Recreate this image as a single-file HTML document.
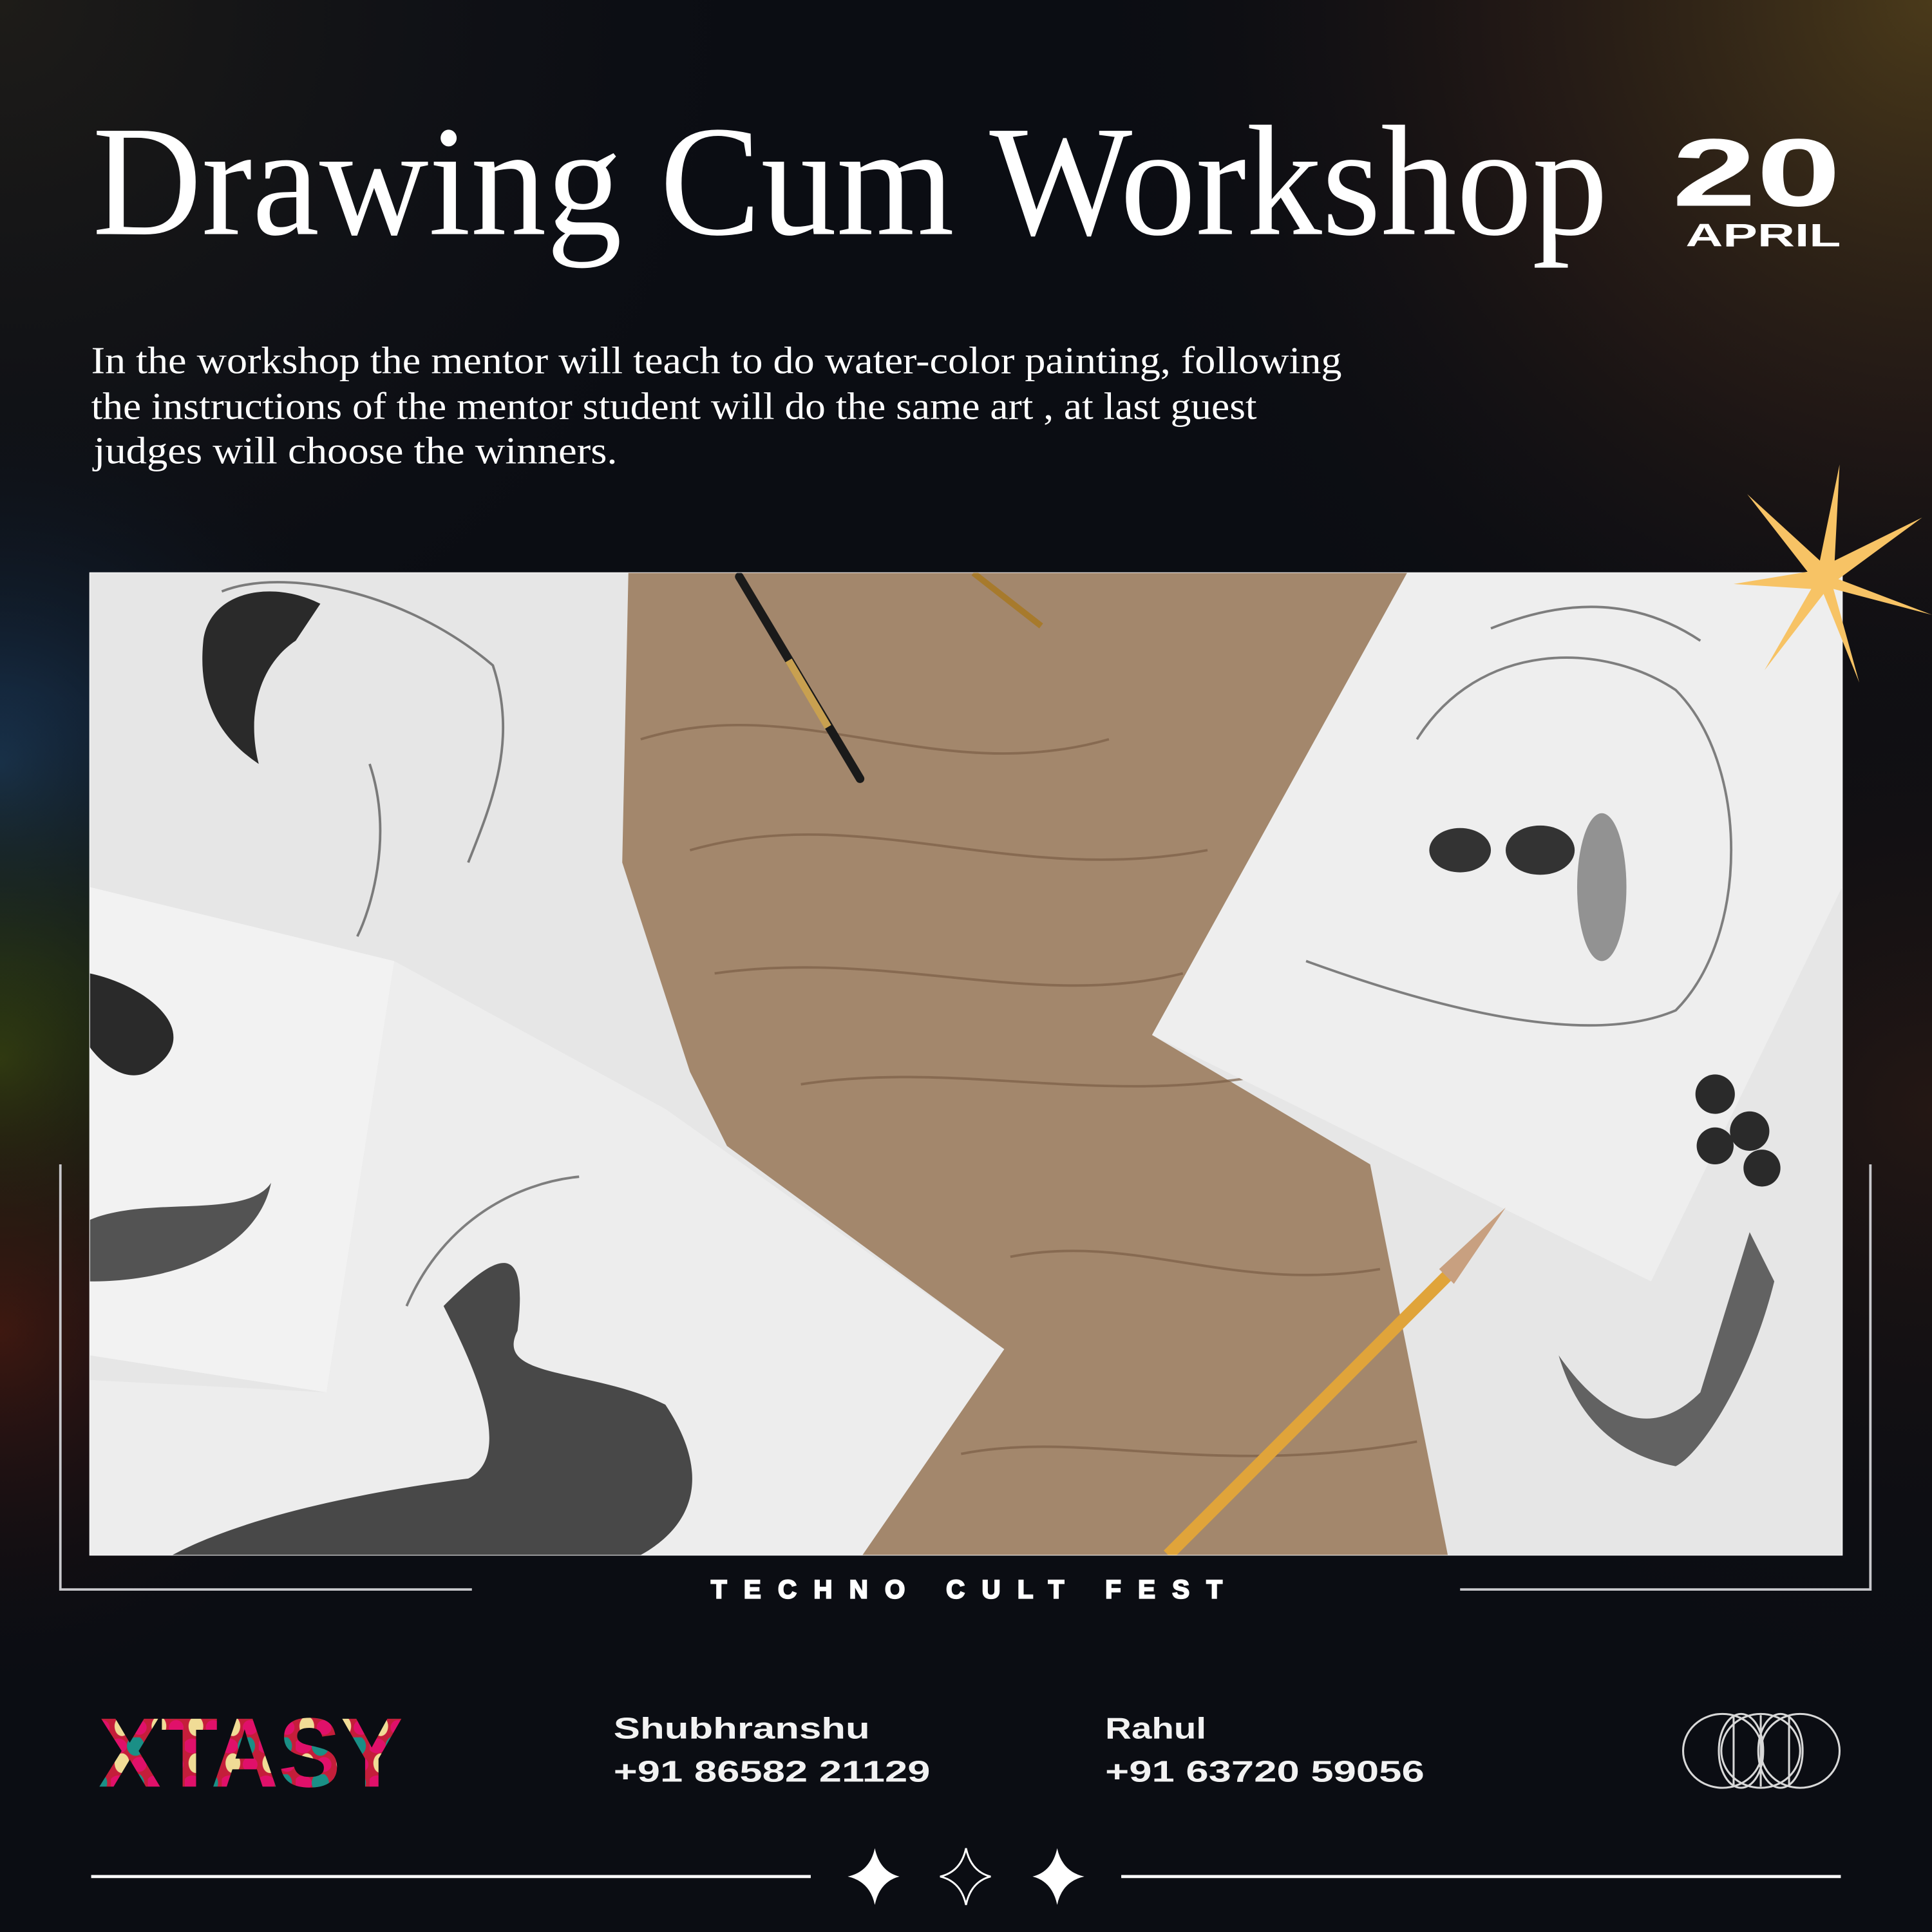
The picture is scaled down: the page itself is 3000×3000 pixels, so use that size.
<!DOCTYPE html>
<html><head><meta charset="utf-8"><style>
html,body{margin:0;padding:0;background:#0b0d12;width:3000px;height:3000px;overflow:hidden}
svg{display:block}
</style></head><body>
<svg width="3000" height="3000" viewBox="0 0 1568 1568" xmlns="http://www.w3.org/2000/svg">
<defs>
<radialGradient id="tr" cx="1568" cy="0" r="700" gradientUnits="userSpaceOnUse">
<stop offset="0" stop-color="#4a3a1a"/><stop offset="0.5" stop-color="#2a1c16" stop-opacity="0.7"/><stop offset="1" stop-color="#0b0d12" stop-opacity="0"/></radialGradient>
<radialGradient id="lb" cx="0" cy="620" r="320" gradientUnits="userSpaceOnUse">
<stop offset="0" stop-color="#1b3a5a" stop-opacity="0.9"/><stop offset="1" stop-color="#0b0d12" stop-opacity="0"/></radialGradient>
<radialGradient id="lg" cx="0" cy="860" r="300" gradientUnits="userSpaceOnUse">
<stop offset="0" stop-color="#3a4a10" stop-opacity="0.9"/><stop offset="1" stop-color="#0b0d12" stop-opacity="0"/></radialGradient>
<radialGradient id="lr" cx="0" cy="1080" r="300" gradientUnits="userSpaceOnUse">
<stop offset="0" stop-color="#4a1a10" stop-opacity="0.8"/><stop offset="1" stop-color="#0b0d12" stop-opacity="0"/></radialGradient>
<radialGradient id="tl" cx="0" cy="0" r="600" gradientUnits="userSpaceOnUse">
<stop offset="0" stop-color="#1e1c18"/><stop offset="1" stop-color="#12141a" stop-opacity="0"/></radialGradient>
<radialGradient id="rr" cx="1568" cy="900" r="500" gradientUnits="userSpaceOnUse">
<stop offset="0" stop-color="#2a1a14" stop-opacity="0.8"/><stop offset="1" stop-color="#0b0d12" stop-opacity="0"/></radialGradient>
<pattern id="xt" width="30" height="30" patternUnits="userSpaceOnUse">
<rect width="30" height="30" fill="#c41e3a"/>
<ellipse cx="6" cy="7" rx="7" ry="6" fill="#e0106a"/>
<ellipse cx="20" cy="7" rx="7" ry="8" fill="#1a8f86"/>
<ellipse cx="9" cy="21" rx="6" ry="8" fill="#f0dc96"/>
<ellipse cx="23" cy="22" rx="6" ry="6" fill="#e0106a"/>
</pattern>
</defs>
<rect width="1568" height="1568" fill="#0b0d13"/>
<rect width="1568" height="1568" fill="url(#tl)"/>
<rect width="1568" height="1568" fill="url(#tr)"/>
<rect width="1568" height="1568" fill="url(#rr)"/>
<rect width="1568" height="1568" fill="url(#lb)"/>
<rect width="1568" height="1568" fill="url(#lg)"/>
<rect width="1568" height="1568" fill="url(#lr)"/>

<text x="75" y="190" font-family="Liberation Serif, serif" font-size="128" fill="#fff" textLength="1230" lengthAdjust="spacingAndGlyphs">Drawing Cum Workshop</text>
<text x="1357" y="167" font-family="Liberation Sans, sans-serif" font-weight="bold" font-size="78" fill="#fff" textLength="137" lengthAdjust="spacingAndGlyphs">20</text>
<text x="1368" y="200" font-family="Liberation Sans, sans-serif" font-weight="bold" font-size="26" fill="#fff" textLength="126" lengthAdjust="spacingAndGlyphs">APRIL</text>

<g font-family="Liberation Serif, serif" font-size="31" fill="#fff">
<text x="74" y="303" textLength="1015" lengthAdjust="spacingAndGlyphs">In the workshop the mentor will teach to do water-color painting, following</text>
<text x="74" y="340" textLength="946" lengthAdjust="spacingAndGlyphs">the instructions of the mentor student will do the same art , at last guest</text>
<text x="76" y="376" textLength="425" lengthAdjust="spacingAndGlyphs">judges will choose the winners.</text>
</g>

<rect x="72.5" y="464.5" width="1423" height="798" fill="#fff"/>
<svg x="73" y="465" width="1422" height="797" viewBox="73 465 1422 797">
<rect x="73" y="465" width="1422" height="797" fill="#e6e6e6"/>
<polygon points="510,465 1142,465 935,840 1112,945 1175,1262 700,1262 815,1095 590,930 560,870 505,700" fill="#a3876c"/>
<g stroke="#7a5e46" stroke-width="2" fill="none" opacity="0.7">
<path d="M520,600 C650,560 760,640 900,600"/>
<path d="M560,690 C700,650 820,720 980,690"/>
<path d="M580,790 C720,770 840,820 960,790"/>
<path d="M650,880 C780,860 900,900 1040,870"/>
<path d="M820,1020 C920,1000 1000,1050 1120,1030"/>
<path d="M780,1180 C880,1160 980,1200 1150,1170"/>
</g>
<polygon points="1142,465 1495,465 1495,720 1340,1040 935,840" fill="#eeeeee"/>
<polygon points="73,720 320,780 265,1130 73,1100" fill="#f2f2f2"/>
<polygon points="320,780 540,900 815,1095 700,1262 73,1262 73,1120 265,1130" fill="#ededed"/>
<g fill="#2a2a2a">
<path d="M165,520 C170,480 220,470 260,490 L240,520 C210,540 200,580 210,620 C180,600 160,570 165,520Z"/>
<ellipse cx="1185" cy="690" rx="25" ry="18" fill="#333"/>
<ellipse cx="1250" cy="690" rx="28" ry="20" fill="#333"/>
<ellipse cx="1300" cy="720" rx="20" ry="60" fill="#555" opacity="0.6"/>
<path d="M73,790 C120,800 170,840 120,870 C100,880 80,860 73,850Z"/>
<path d="M73,990 C120,970 200,990 220,960 C210,1010 150,1040 73,1040Z" opacity="0.8"/>
<path d="M360,1060 C400,1020 430,1000 420,1080 C400,1120 480,1110 540,1140 C580,1200 560,1240 520,1262 L140,1262 C200,1230 300,1210 380,1200 C420,1180 380,1100 360,1060Z" opacity="0.85"/>
<circle cx="1392" cy="888" r="16"/><circle cx="1420" cy="918" r="16"/><circle cx="1430" cy="948" r="15"/><circle cx="1392" cy="930" r="15"/>
<path d="M1265,1100 C1300,1150 1340,1170 1380,1130 L1420,1000 L1440,1040 C1420,1120 1380,1180 1360,1190 C1310,1180 1280,1150 1265,1100Z" opacity="0.7"/>
</g>
<g stroke="#333" stroke-width="2" fill="none" opacity="0.6">
<path d="M180,480 C230,460 330,480 400,540 C420,600 400,650 380,700"/>
<path d="M300,620 C320,680 300,740 290,760"/>
<path d="M1150,600 C1200,520 1300,520 1360,560 C1420,620 1420,760 1360,820 C1290,850 1170,820 1060,780"/>
<path d="M1210,510 C1260,490 1320,480 1380,520"/>
<path d="M330,1060 C360,990 420,960 470,955"/>
</g>
<line x1="600" y1="468" x2="698" y2="632" stroke="#1a1a1a" stroke-width="7" stroke-linecap="round"/>
<line x1="640" y1="536" x2="672" y2="590" stroke="#c8a050" stroke-width="6"/>
<line x1="790" y1="465" x2="845" y2="508" stroke="#a77a2c" stroke-width="5"/>
<line x1="948" y1="1262" x2="1175" y2="1035" stroke="#e0a43a" stroke-width="10"/>
<polygon points="1168,1030 1180,1042 1222,980" fill="#c8a080"/>
</svg>

<polygon fill="#f7c365" points="1493,377 1489,455 1560,420 1492,470 1568,499 1488,478 1509,554 1480,482 1432,544 1470,478 1407,474 1467,464 1418,401 1477,455"/>

<g stroke="#c8c8cc" stroke-width="2" fill="none">
<path d="M49,945 V1290 H383"/>
<path d="M1518,945 V1290 H1185"/>
</g>
<text x="577" y="1297" font-family="Liberation Sans, sans-serif" font-weight="bold" font-size="21" fill="#fff" stroke="#fff" stroke-width="1.2" textLength="415" lengthAdjust="spacing">TECHNO CULT FEST</text>

<text x="80" y="1450" font-family="Liberation Sans, sans-serif" font-weight="bold" font-size="80" fill="url(#xt)" textLength="247" lengthAdjust="spacingAndGlyphs">XTASY</text>

<g font-family="Liberation Sans, sans-serif" font-weight="bold" fill="#f2f2f2" font-size="24">
<text x="498" y="1411" textLength="208" lengthAdjust="spacingAndGlyphs">Shubhranshu</text>
<text x="498" y="1446" textLength="257" lengthAdjust="spacingAndGlyphs">+91 86582 21129</text>
<text x="897" y="1411" textLength="82" lengthAdjust="spacingAndGlyphs">Rahul</text>
<text x="897" y="1446" textLength="259" lengthAdjust="spacingAndGlyphs">+91 63720 59056</text>
</g>

<g stroke="#d8d8d8" stroke-width="1.6" fill="none">
<ellipse cx="1398" cy="1421" rx="32" ry="30"/>
<ellipse cx="1429" cy="1421" rx="32" ry="30"/>
<ellipse cx="1461" cy="1421" rx="32" ry="30"/>
<ellipse cx="1413" cy="1421" rx="18" ry="30"/>
<ellipse cx="1445" cy="1421" rx="18" ry="30"/>
<line x1="1407" y1="1392" x2="1407" y2="1450"/>
<line x1="1429" y1="1392" x2="1429" y2="1450"/>
<line x1="1452" y1="1392" x2="1452" y2="1450"/>
</g>

<g stroke="#fff" stroke-width="2.5">
<line x1="74" y1="1523" x2="658" y2="1523"/>
<line x1="910" y1="1523" x2="1494" y2="1523"/>
</g>
<path d="M710,1500 Q714,1519 730,1523 Q714,1527 710,1546 Q706,1527 688,1523 Q706,1519 710,1500Z" fill="#fff"/>
<path d="M784,1500 Q788,1519 804,1523 Q788,1527 784,1546 Q780,1527 763,1523 Q780,1519 784,1500Z" fill="none" stroke="#fff" stroke-width="1.5"/>
<path d="M858,1500 Q862,1519 880,1523 Q862,1527 858,1546 Q854,1527 838,1523 Q854,1519 858,1500Z" fill="#fff"/>
</svg>
</body></html>
